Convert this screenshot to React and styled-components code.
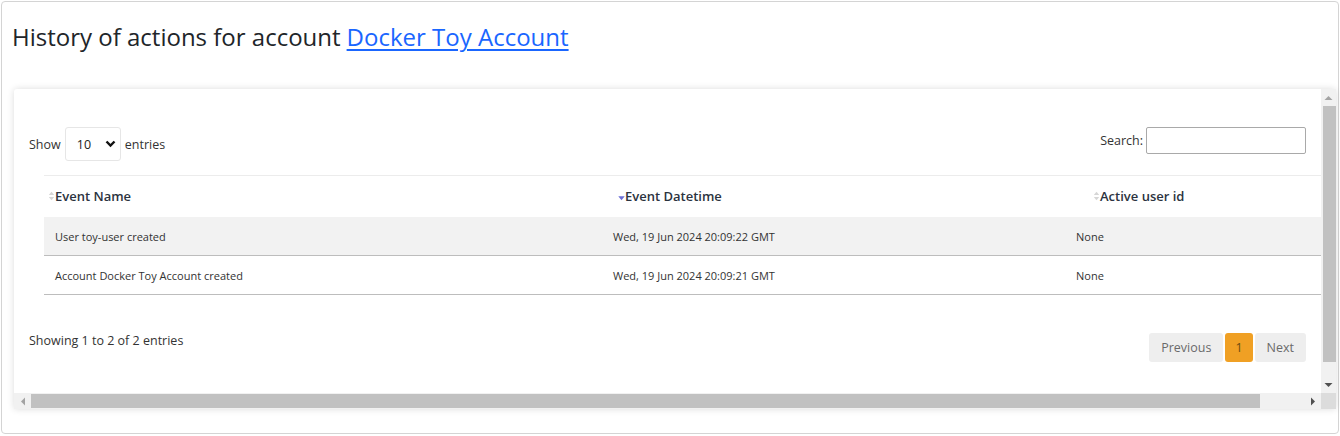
import React from "react"
import styled, { createGlobalStyle } from "styled-components"

const GlobalStyle = createGlobalStyle`
    body{
        margin: 0;
        background: #fff;
        font-family: "Open Sans", "Liberation Sans", sans-serif;
        color: #333;
    }
`

const rows = [
    { name: "User toy-user created", date: "Wed, 19 Jun 2024 20:09:22 GMT", user: "None" },
    { name: "Account Docker Toy Account created", date: "Wed, 19 Jun 2024 20:09:21 GMT", user: "None" },
]

const HEAD_COLS = "570px 475px 1fr"
const BODY_COLS = "558px 463px 1fr"

function SortIcon({ dir }) {
    if (dir === "desc") {
        return (
            <svg width="7" height="10" viewBox="0 0 7 10">
                <path d="M0.3 5.3 L6.7 5.3 L3.5 9.2 Z" fill="#6c6fd6" />
            </svg>
        )
    }
    return (
        <svg width="7" height="10" viewBox="0 0 7 10">
            <path d="M0.8 4 L6.2 4 L3.5 0.8 Z" fill="#d6d6d6" />
            <path d="M0.8 6 L6.2 6 L3.5 9.2 Z" fill="#d6d6d6" />
        </svg>
    )
}

function Arrow({ dir, dark }) {
    const c = dark ? "#505050" : "#a3a3a3"
    const d = {
        up: "M0.5 5 L4.5 1 L8.5 5 Z",
        down: "M0.5 1 L4.5 5 L8.5 1 Z",
        left: "M5 0.5 L1 4.5 L5 8.5 Z",
        right: "M1 0.5 L5 4.5 L1 8.5 Z",
    }[dir]
    const vert = dir === "up" || dir === "down"
    return (
        <svg width={vert ? 9 : 6} height={vert ? 6 : 9} viewBox={vert ? "0 0 9 6" : "0 0 6 9"}>
            <path d={d} fill={c} />
        </svg>
    )
}

export default function App() {
    return (
        <>
            <GlobalStyle />
            <Page>
                <Title>
                    History of actions for account <a href="#">Docker Toy Account</a>
                </Title>

                <Card>
                    <Viewport>
                        <Inner>
                            <Toolbar>
                                <Length>
                                    Show
                                    <SelectBox>
                                        <span>10</span>
                                        <svg width="11" height="8" viewBox="0 0 11 8">
                                            <path d="M1.5 1.5 L5.5 5.5 L9.5 1.5" stroke="#111" strokeWidth="2.4" fill="none" />
                                        </svg>
                                    </SelectBox>
                                    entries
                                </Length>
                                <Search>
                                    Search:
                                    <SearchInput type="text" />
                                </Search>
                            </Toolbar>

                            <Table>
                                <Row $cols={HEAD_COLS} $head>
                                    <HeadCell><SortIcon />Event Name</HeadCell>
                                    <HeadCell><SortIcon dir="desc" />Event Datetime</HeadCell>
                                    <HeadCell><SortIcon />Active user id</HeadCell>
                                </Row>
                                {rows.map((r, i) => (
                                    <Row key={i} $cols={BODY_COLS} $odd={i % 2 === 0}>
                                        <Cell>{r.name}</Cell>
                                        <Cell>{r.date}</Cell>
                                        <Cell>{r.user}</Cell>
                                    </Row>
                                ))}
                            </Table>

                            <Footer>
                                <Info>Showing 1 to 2 of 2 entries</Info>
                                <Pager>
                                    <PageBtn>Previous</PageBtn>
                                    <PageBtn $active>1</PageBtn>
                                    <PageBtn>Next</PageBtn>
                                </Pager>
                            </Footer>
                        </Inner>
                    </Viewport>

                    <VScroll>
                        <ArrowBox><Arrow dir="up" /></ArrowBox>
                        <VTrack><VThumb /></VTrack>
                        <ArrowBox><Arrow dir="down" dark /></ArrowBox>
                    </VScroll>

                    <HScroll>
                        <ArrowBox><Arrow dir="left" /></ArrowBox>
                        <HTrack><HThumb /></HTrack>
                        <ArrowBox><Arrow dir="right" dark /></ArrowBox>
                    </HScroll>

                    <Corner />
                </Card>
            </Page>
        </>
    )
}

const Page = styled.div`
    box-sizing: border-box;
    width: 1338px;
    height: 433px;
    margin: 1px 0 0 1px;
    border: 1px solid #d4d4d4;
    border-radius: 4px;
    padding: 0 0 0 12px;
`

const Title = styled.h1`
    margin: 0 0 0 -2px;
    height: 87px;
    display: flex;
    align-items: center;
    padding-bottom: 18px;
    box-sizing: border-box;
    font-size: 24px;
    font-weight: 500;
    color: #212529;

    a{
        color: #1a66ff;
        text-decoration: underline;
        text-underline-offset: 3px;
        text-decoration-thickness: 2px;
        margin-left: 6px;
    }
`

const Card = styled.div`
    width: 1322px;
    height: 320px;
    display: grid;
    grid-template-columns: 1fr 15px;
    grid-template-rows: 1fr 16px;
    background: #fff;
    box-shadow: 0 0 7px rgba(0,0,0,.14);
    border-radius: 3px 3px 0 0;
`

const Viewport = styled.div`
    overflow: hidden;
    min-width: 0;
`

const Inner = styled.div`
    padding: 38px 15px 0 15px;
`

const Toolbar = styled.div`
    display: flex;
    justify-content: space-between;
    align-items: flex-start;
    height: 48px;
`

const Length = styled.div`
    display: flex;
    align-items: center;
    gap: 4px;
    font-size: 12.5px;
    color: #333;
`

const SelectBox = styled.div`
    box-sizing: border-box;
    width: 56px;
    height: 34px;
    border: 1px solid #e6e6e6;
    border-radius: 3px;
    display: flex;
    align-items: center;
    justify-content: space-between;
    padding: 0 4px 0 11px;
    font-size: 12.5px;
    color: #222;
`

const Search = styled.label`
    display: flex;
    align-items: center;
    gap: 3px;
    font-size: 12.5px;
    color: #333;
    height: 27px;
`

const SearchInput = styled.input`
    box-sizing: border-box;
    width: 160px;
    height: 27px;
    border: 1px solid #a9a9a9;
    border-radius: 2px;
    outline: none;
`

const Table = styled.div`
    margin-left: 15px;
    width: 1300px;
    border-top: 1px solid #ececec;
`

const Row = styled.div`
    display: grid;
    grid-template-columns: ${p => p.$cols};
    align-items: center;
    height: ${p => (p.$head ? "41px" : "39px")};
    padding-bottom: ${p => (p.$head ? "1px" : "0")};
    box-sizing: border-box;
    background: ${p => (p.$odd ? "#f2f2f2" : "#fff")};
    border-bottom: ${p => (p.$head ? "none" : "1px solid #bdbdbd")};
`

const HeadCell = styled.div`
    display: flex;
    align-items: center;
    padding-left: 4px;
    font-size: 13px;
    font-weight: 600;
    color: #2b3340;
`

const Cell = styled.div`
    padding-left: 11px;
    font-size: 11px;
    color: #333;
`

const Footer = styled.div`
    display: flex;
    justify-content: space-between;
    align-items: flex-start;
    margin-top: 38px;
`

const Info = styled.div`
    font-size: 12.5px;
    color: #333;
    margin-top: -1px;
`

const Pager = styled.div`
    display: flex;
    gap: 2px;
`

const PageBtn = styled.div`
    height: 29px;
    display: flex;
    align-items: center;
    padding: 0 ${p => (p.$active ? "10px" : "12px")};
    border-radius: 3px;
    background: ${p => (p.$active ? "#f0a024" : "#eeeeee")};
    color: ${p => (p.$active ? "#6b4a10" : "#6a6a6a")};
    font-size: 12.5px;
`

const VScroll = styled.div`
    display: grid;
    grid-template-rows: 17px 1fr 17px;
    background: #f1f1f1;
`

const HScroll = styled.div`
    display: grid;
    grid-template-columns: 17px 1fr 16px;
    background: #f1f1f1;
`

const ArrowBox = styled.div`
    display: flex;
    align-items: center;
    justify-content: center;
`

const VTrack = styled.div`
    padding: 0 0 14px 2px;
`

const VThumb = styled.div`
    height: 100%;
    background: #c1c1c1;
`

const HTrack = styled.div`
    padding: 1px 45px 1px 0;
`

const HThumb = styled.div`
    height: 100%;
    background: #c1c1c1;
`

const Corner = styled.div`
    background: #dcdcdc;
`
